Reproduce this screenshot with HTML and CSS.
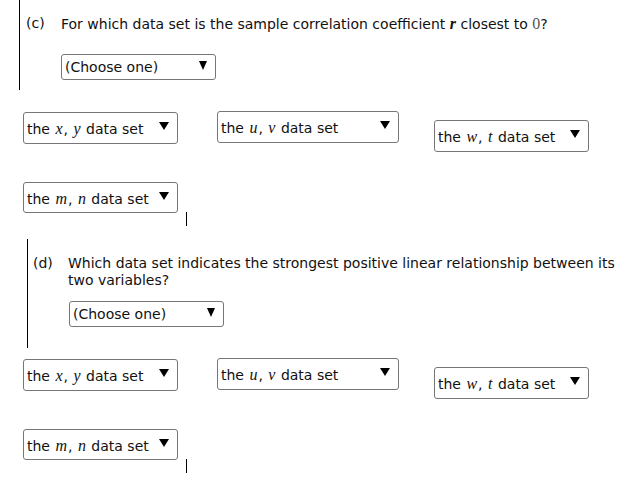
FILE: index.html
```html
<!DOCTYPE html>
<html>
<head>
<meta charset="utf-8">
<link rel="stylesheet" href="styles.css">
</head>
<body>
<div class="part part-c">
  <div class="q"><span class="lbl">(c)</span><span class="qtext">For which data set is the sample correlation coefficient <span class="mb">r</span> closest to <span class="mn">0</span>?</span></div>
  <div class="choose">(Choose one)<span class="arr"></span></div>
</div>
<div class="answers answers-c">
  <div class="row">
    <div class="sel s1">the&nbsp;<i class="mi">x</i>,&nbsp;<i class="mi">y</i>&nbsp;data set<span class="caret"></span></div>
    <div class="sel s2">the&nbsp;<i class="mi">u</i>,&nbsp;<i class="mi">v</i>&nbsp;data set<span class="caret"></span></div>
    <div class="sel s3">the&nbsp;<i class="mi">w</i>,&nbsp;<i class="mi">t</i>&nbsp;data set<span class="caret"></span></div>
  </div>
  <div class="row row2">
    <div class="sel s4">the&nbsp;<i class="mi">m</i>,&nbsp;<i class="mi">n</i>&nbsp;data set<span class="caret"></span></div>
    <span class="cursor"></span>
  </div>
</div>
<div class="part part-d">
  <div class="q"><span class="lbl">(d)</span><span class="qtext">Which data set indicates the strongest positive linear relationship between its two variables?</span></div>
  <div class="choose">(Choose one)<span class="arr"></span></div>
</div>
<div class="answers answers-d">
  <div class="row">
    <div class="sel s1">the&nbsp;<i class="mi">x</i>,&nbsp;<i class="mi">y</i>&nbsp;data set<span class="caret"></span></div>
    <div class="sel s2">the&nbsp;<i class="mi">u</i>,&nbsp;<i class="mi">v</i>&nbsp;data set<span class="caret"></span></div>
    <div class="sel s3">the&nbsp;<i class="mi">w</i>,&nbsp;<i class="mi">t</i>&nbsp;data set<span class="caret"></span></div>
  </div>
  <div class="row row2">
    <div class="sel s4">the&nbsp;<i class="mi">m</i>,&nbsp;<i class="mi">n</i>&nbsp;data set<span class="caret"></span></div>
    <span class="cursor"></span>
  </div>
</div>
</body>
</html>
```
FILE: styles.css
```css
html, body {
  margin: 0;
  padding: 0;
  background: #fff;
}
body {
  font-family: "DejaVu Sans", Verdana, sans-serif;
  font-size: 14px;
  color: #111;
  width: 627px;
}
.part {
  border-left: 1px solid #000;
  box-sizing: border-box;
}
.part-c {
  margin-left: 19px;
  padding: 15px 0 10px 6px;
}
.part-d {
  margin-top: 13px;
  margin-left: 27px;
  padding: 16px 0 21px 5px;
}
.q {
  display: flex;
  line-height: 17px;
}
.lbl {
  flex: none;
  width: 35px;
}
.qtext {
  max-width: 552px;
}
.mb {
  font-family: "Liberation Serif", "Times New Roman", serif;
  font-style: italic;
  font-weight: bold;
  font-size: 16px;
}
.mn {
  font-family: "Liberation Serif", "Times New Roman", serif;
  font-size: 16px;
  color: #555;
}
.mi {
  font-family: "Liberation Serif", "Times New Roman", serif;
  font-style: italic;
  font-size: 16px;
  padding: 0 1px;
}
.choose {
  display: flex;
  align-items: center;
  box-sizing: border-box;
  width: 155px;
  height: 26px;
  margin-left: 35px;
  padding-left: 3px;
  border: 1px solid #767676;
  border-radius: 3px;
  background: #fff;
}
.part-c .choose { margin-top: 21px; }
.part-d .choose { margin-top: 12px; margin-left: 36px; }
.arr {
  margin-left: auto;
  margin-right: 8px;
  margin-top: -3px;
  width: 0;
  height: 0;
  border-left: 4px solid transparent;
  border-right: 4px solid transparent;
  border-top: 9px solid #000;
}
.answers-c { margin-top: 21px; }
.answers-d { margin-top: 10px; }
.row {
  display: flex;
  align-items: flex-start;
  padding-left: 23px;
}
.row2 { margin-top: 30px; }
.sel {
  display: flex;
  align-items: center;
  box-sizing: border-box;
  width: 155px;
  height: 32px;
  padding: 2px 0 0 3px;
  border: 1px solid #767676;
  border-radius: 3px;
  background: #fff;
  white-space: nowrap;
  color: #111;
}
.s1 { margin-top: 1px; }
.s2 { margin-left: 39px; width: 182px; }
.s3 { margin-left: 35px; margin-top: 9px; }
.s4 { height: 31px; }
.caret {
  align-self: flex-start;
  margin-left: auto;
  margin-right: 8px;
  margin-top: 7px;
  width: 0;
  height: 0;
  border-left: 5px solid transparent;
  border-right: 5px solid transparent;
  border-top: 8px solid #000;
}
.cursor {
  width: 1px;
  height: 14px;
  margin-left: 8px;
  margin-top: 30px;
  background: #000;
}
```
